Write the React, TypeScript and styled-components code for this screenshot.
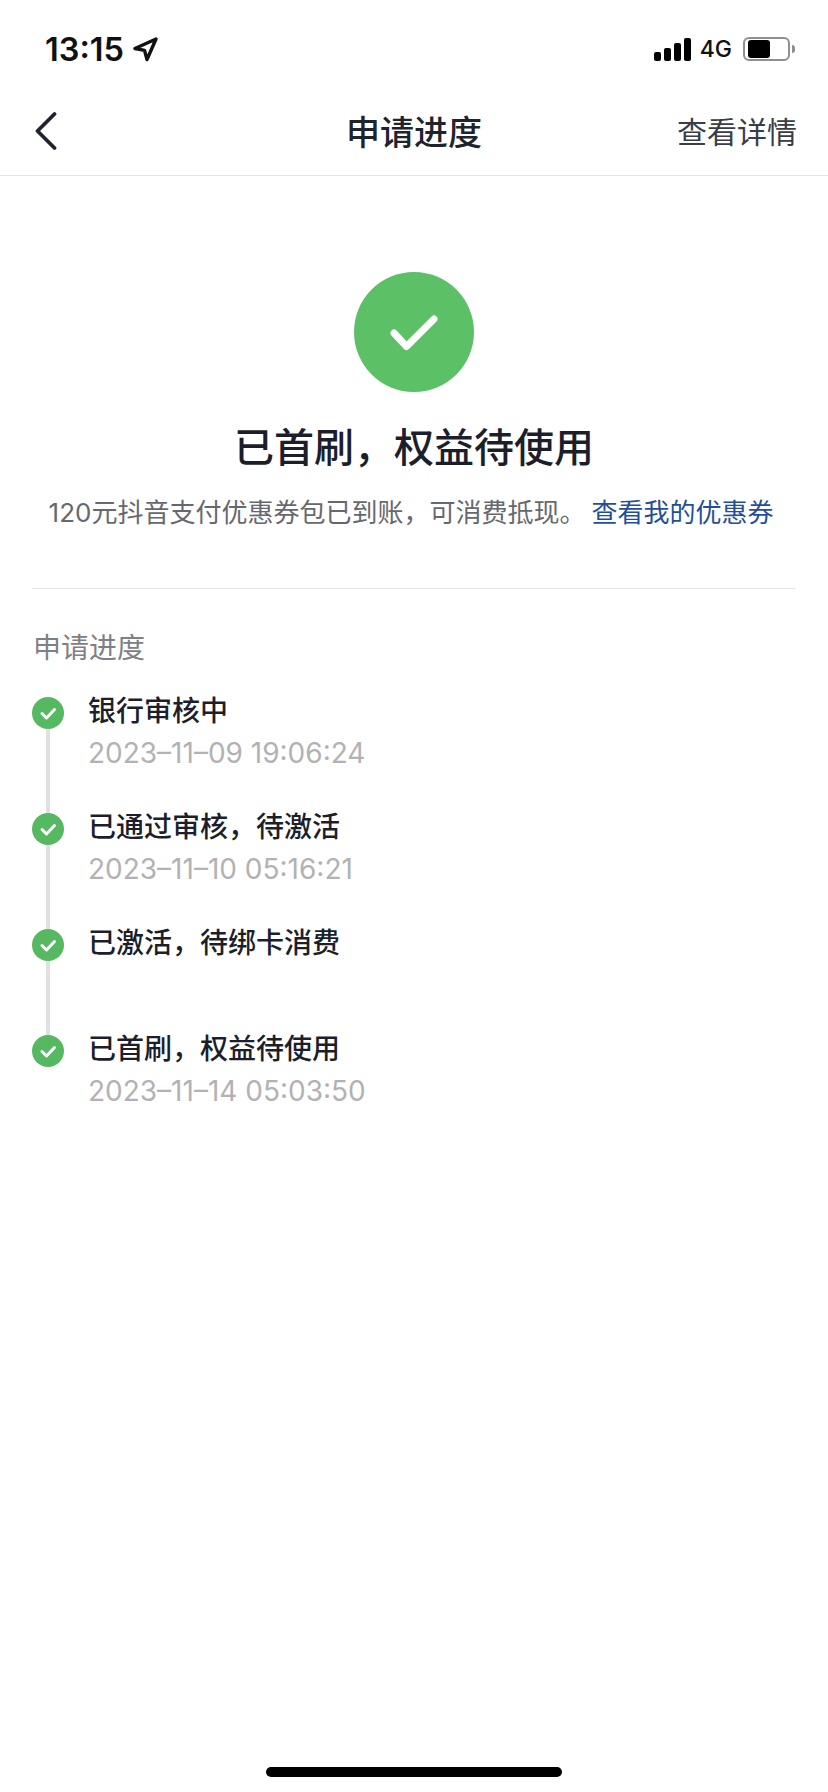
import React from "react";
import styled, { createGlobalStyle } from "styled-components";

type StepType = {
  title: string;
  date?: string;
  height: number;
};

const STEPS: StepType[] = [
  { title: "银行审核中", date: "2023–11–09 19:06:24", height: 116 },
  { title: "已通过审核，待激活", date: "2023–11–10 05:16:21", height: 116 },
  { title: "已激活，待绑卡消费", height: 106 },
  { title: "已首刷，权益待使用", date: "2023–11–14 05:03:50", height: 90 },
];

export default function App() {
  return (
    <S.Page>
      <GlobalStyle />
      <S.StatusBar>
        <S.Time>
          13:15
          <svg width="26" height="26" viewBox="0 0 26 26" fill="none">
            <path
              d="M24 3 3 12.5l9.5 1.8L15 23.5z"
              stroke="#111"
              strokeWidth="3.4"
              strokeLinejoin="round"
            />
          </svg>
        </S.Time>
        <S.StatusRight>
          <S.Signal>
            <S.SignalBar height={9} />
            <S.SignalBar height={13} />
            <S.SignalBar height={18} />
            <S.SignalBar height={23} />
          </S.Signal>
          <S.Network>4G</S.Network>
          <S.Battery>
            <S.BatteryFill />
          </S.Battery>
          <S.BatteryCap />
        </S.StatusRight>
      </S.StatusBar>

      <S.NavBar>
        <S.BackButton>
          <svg width="24" height="40" viewBox="0 0 24 40" fill="none">
            <path
              d="M21.5 3 4.5 20l17 17"
              stroke="#20232e"
              strokeWidth="3.8"
              strokeLinecap="round"
              strokeLinejoin="round"
            />
          </svg>
        </S.BackButton>
        <S.NavTitle>申请进度</S.NavTitle>
        <S.NavAction>查看详情</S.NavAction>
      </S.NavBar>

      <S.Result>
        <S.ResultIcon>
          <svg width="120" height="120" viewBox="0 0 120 120" fill="none">
            <path
              d="M40 61l12.500 13.500L80 47"
              stroke="#fff"
              strokeWidth="7"
              strokeLinecap="round"
              strokeLinejoin="round"
            />
          </svg>
        </S.ResultIcon>
        <S.ResultTitle>已首刷，权益待使用</S.ResultTitle>
        <S.ResultText>
          120元抖音支付优惠券包已到账，可消费抵现。
          <S.ResultLink>查看我的优惠券</S.ResultLink>
        </S.ResultText>
      </S.Result>

      <S.Progress>
        <S.SectionLabel>申请进度</S.SectionLabel>
        <S.StepList>
          {STEPS.map((step, index) => (
            <S.Step key={step.title} height={step.height}>
              <S.Rail>
                <S.Dot>
                  <svg width="32" height="32" viewBox="0 0 32 32" fill="none">
                    <path
                      d="M10 16.500l4.500 4.500 8-8.500"
                      stroke="#fff"
                      strokeWidth="3"
                      strokeLinecap="round"
                      strokeLinejoin="round"
                    />
                  </svg>
                </S.Dot>
                {index < STEPS.length - 1 && <S.RailLine />}
              </S.Rail>
              <S.StepBody>
                <S.StepTitle>{step.title}</S.StepTitle>
                {step.date && <S.StepDate>{step.date}</S.StepDate>}
              </S.StepBody>
            </S.Step>
          ))}
        </S.StepList>
      </S.Progress>

      <S.HomeIndicator />
    </S.Page>
  );
}

const GlobalStyle = createGlobalStyle`
  html, body {
    margin: 0;
    padding: 0;
    background: #fff;
  }
  * {
    box-sizing: border-box;
  }
`;

const S = {
  Page: styled.div`
    position: relative;
    width: 828px;
    height: 1792px;
    overflow: hidden;
    display: flex;
    flex-direction: column;
    background: #fff;
    font-family: Inter, "Noto Sans CJK SC", sans-serif;
  `,
  StatusBar: styled.div`
    height: 96px;
    padding: 2px 33px 0 45px;
    display: flex;
    align-items: center;
    justify-content: space-between;
  `,
  Time: styled.div`
    display: flex;
    align-items: center;
    gap: 8px;
    font-size: 32.5px;
    font-weight: 600;
    color: #111;
  `,
  StatusRight: styled.div`
    display: flex;
    align-items: center;
  `,
  Signal: styled.div`
    display: flex;
    align-items: flex-end;
    gap: 3px;
    height: 23px;
  `,
  SignalBar: styled.div<{ height: number }>`
    width: 7px;
    height: ${({ height }) => height}px;
    border-radius: 2px;
    background: #000;
  `,
  Network: styled.div`
    margin: 0 11px 0 9px;
    font-size: 23px;
    font-weight: 500;
    color: #111;
  `,
  Battery: styled.div`
    width: 47px;
    height: 24px;
    padding: 1px 3px;
    border: 2px solid #8f8f8f;
    border-radius: 6px;
  `,
  BatteryFill: styled.div`
    width: 22px;
    height: 100%;
    border-radius: 3px;
    background: #000;
  `,
  BatteryCap: styled.div`
    width: 3px;
    height: 8px;
    margin-left: 2px;
    border-radius: 0 3px 3px 0;
    background: #8f8f8f;
  `,
  NavBar: styled.div`
    position: relative;
    height: 80px;
    padding: 0 31px 11px 33px;
    display: flex;
    align-items: center;
    justify-content: space-between;
    border-bottom: 1px solid #e4e4e4;
  `,
  BackButton: styled.div`
    display: flex;
    margin-top: 2px;
  `,
  NavTitle: styled.div`
    position: absolute;
    left: 0;
    right: 0;
    text-align: center;
    font-size: 34px;
    font-weight: 500;
    color: #20232e;
  `,
  NavAction: styled.div`
    font-size: 30px;
    color: #3a3c46;
  `,
  Result: styled.div`
    padding-top: 96px;
    height: 413px;
    margin: 0 32px;
    display: flex;
    flex-direction: column;
    align-items: center;
    border-bottom: 1px solid #e6e6e6;
  `,
  ResultIcon: styled.div`
    width: 120px;
    height: 120px;
    border-radius: 50%;
    background: #5cc066;
    display: flex;
  `,
  ResultTitle: styled.div`
    margin-top: 28px;
    font-size: 40px;
    line-height: 56px;
    font-weight: 500;
    color: #1c1f2b;
  `,
  ResultText: styled.div`
    margin-top: 17px;
    padding-right: 6px;
    font-size: 26px;
    line-height: 40px;
    white-space: nowrap;
    color: #666870;
  `,
  ResultLink: styled.span`
    margin-left: 6px;
    color: #1f4e9c;
  `,
  Progress: styled.div`
    padding: 41px 32px 0;
    display: flex;
    flex-direction: column;
  `,
  SectionLabel: styled.div`
    padding-left: 1px;
    font-size: 28px;
    line-height: 36px;
    color: #7f8085;
  `,
  StepList: styled.div`
    margin-top: 31px;
    display: flex;
    flex-direction: column;
  `,
  Step: styled.div<{ height: number }>`
    height: ${({ height }) => height}px;
    display: flex;
  `,
  Rail: styled.div`
    width: 57px;
    display: flex;
    flex-direction: column;
    flex-shrink: 0;
  `,
  Dot: styled.div`
    width: 32px;
    height: 32px;
    border-radius: 50%;
    background: #56b961;
    display: flex;
    flex-shrink: 0;
  `,
  RailLine: styled.div`
    flex: 1;
    width: 4px;
    margin-left: 14px;
    background: #e0e0e0;
  `,
  StepBody: styled.div`
    margin-top: -6px;
    margin-left: -1px;
    display: flex;
    flex-direction: column;
  `,
  StepTitle: styled.div`
    font-size: 28px;
    line-height: 40px;
    font-weight: 500;
    color: #1c1f2b;
  `,
  StepDate: styled.div`
    margin-top: 2px;
    font-size: 28px;
    line-height: 40px;
    color: #b2b2b4;
  `,
  HomeIndicator: styled.div`
    position: absolute;
    left: 266px;
    bottom: 15px;
    width: 296px;
    height: 10px;
    border-radius: 5px;
    background: #000;
  `,
};
